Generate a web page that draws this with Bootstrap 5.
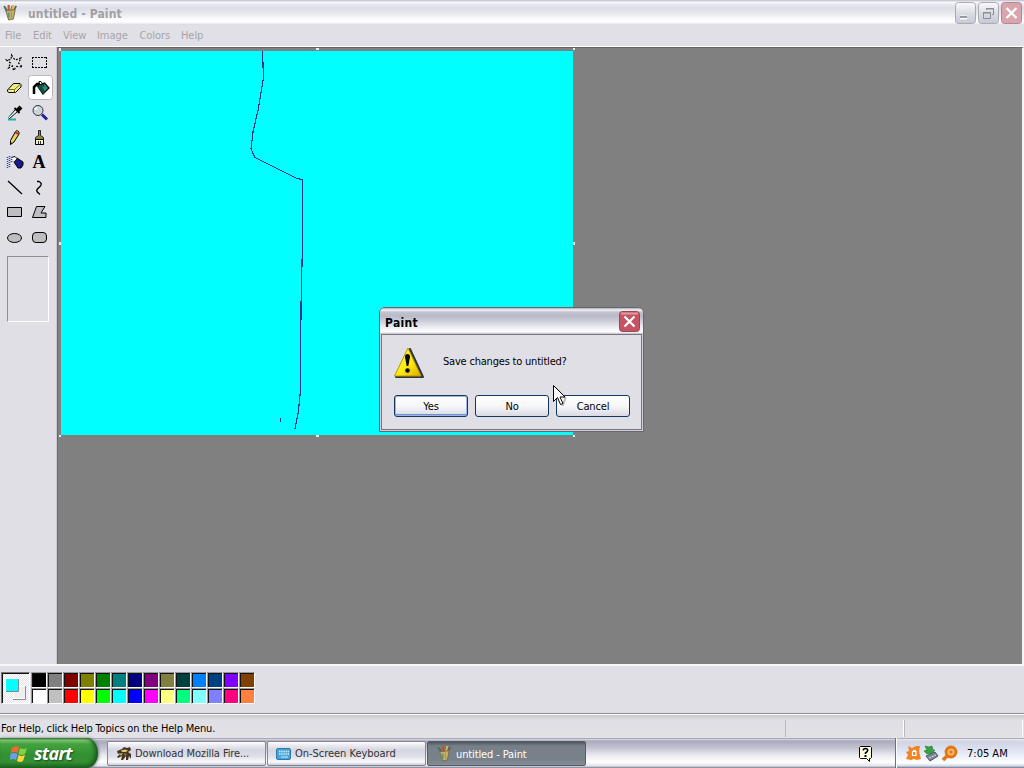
<!DOCTYPE html>
<html lang="en">
<head>
<meta charset="utf-8">
<title>untitled - Paint</title>
<link href="https://cdn.jsdelivr.net/npm/bootstrap@5.3.0/dist/css/bootstrap.min.css" rel="stylesheet">
<style>
body{width:1024px;height:768px;overflow:hidden;font:11px/14px "DejaVu Sans Condensed","DejaVu Sans",sans-serif;font-stretch:condensed;background:#e0dfe5;color:#000}
svg{display:block;flex:none}
span{white-space:nowrap}
.title-bar{height:25px;background:linear-gradient(#c9c8d9 0,#c9c8d9 1px,#fff 2px,#e9e9f0 4px,#dedee8 8px,#e6e6ee 13px,#fbfbfd 19px,#fff 22px,#e6e6ec 24px,#d6d6de);color:#a09fa4;padding:0 2px 0 3px}
.title-bar .name{font-weight:700;font-size:12px;margin:2px 0 0 10px;letter-spacing:.14px}
.cap-btns{gap:2px}
.menu-bar{height:21px;background:#e0e0e6;color:#a6a5ab;padding:1px 5px 0}
.menu-bar span{display:block;letter-spacing:-.07px}
.work{height:618px;border-top:1px solid #fff}
.tool-box{width:57px;background:#e0dfe5;border-right:1px solid #c9c8ce}
.tools{padding:2px 4px 0 2px;display:grid;grid-template-columns:25px 25px;grid-auto-rows:25px}
.tool-opt{width:42px;height:66px;margin:7px 0 0 7px;border:1px solid;border-color:#908f94 #fff #fff #908f94}
.area{background:#808080;border-top:1px solid #666;border-left:1px solid #6c6c6c;border-right:2px solid #f4f4f6;padding:0 0 0 1px}
.color-box{height:50px;border-top:2px solid #f8f8fa;border-bottom:1px solid #8c8c92;padding:6px 0 0 1px;background:#e0dfe5}
.current{width:29px;height:32px;border:1px solid;border-color:#777 #fff #fff #777;box-shadow:inset 1px 1px #111;background:repeating-conic-gradient(#fff 0 25%,#e4e3e8 0 50%) 0 0/2px 2px}
.palette{display:grid;grid-template-columns:repeat(14,16px);grid-auto-rows:16px;margin-left:1px}
.palette i{border:1px solid;border-color:#99989c #fff #fff #99989c;box-shadow:inset 1px 1px #111}
.status{height:24px;border-top:1px solid #fff;background:linear-gradient(#c8c8cf,#e0dfe5 5px,#e1e1e6);padding:4px 1px 0 1px}
.help-txt{letter-spacing:-.18px}
.status i{height:17px;border-left:1px solid #b9b8be;border-right:1px solid #fff}
.task-bar{height:30px;background:linear-gradient(#77778a 0,#dcdce8 1px,#a9a9ba 3px,#c3c3d1 10px,#e9e9f0 17px,#fff 24px,#e2e2ea 28px,#77778e)}
.start{width:98px;border-radius:0 11px 11px 0/0 15px 15px 0;background:linear-gradient(#37742f,#80c977 2px,#45a13d 6px,#319132 17px,#368f32 24px,#206d24);box-shadow:inset -3px -1px 4px #165b1c,1px 0 3px #777788;padding-left:10px;color:#fff;font:italic 700 18px/27px "Open Sans","Liberation Sans",sans-serif;text-shadow:1px 1px 2px #174716;gap:6px}
.st{letter-spacing:-.7px}
.task{height:25px;width:159px;margin-top:3px;border:1px solid #868695;border-radius:2px;background:linear-gradient(#fff 0,#f1f1f5 2px,#d6d6e1 8px,#dedee8 14px,#f9f9fc 20px,#c9c9d5);color:#333;padding:0 8px;gap:3px}
.t1{letter-spacing:-.1px}
.t2{letter-spacing:-.03px}
.task.on{background:linear-gradient(#4f555e,#777f89 4px,#79818b 18px,#858d96);border-color:#565c65;color:#fff}
.t3{margin:2px 0 0 1px;letter-spacing:-.12px}
.tray{width:129px;border-left:1px solid #70707c;box-shadow:inset 1px 0 #fff;background:linear-gradient(#77778a 0,#e8e8ef 1px,#d0d3e2 4px,#dadfee 10px,#edf0fb 18px,#fff 25px,#d5d8e5 28px,#6d7189)}
.dlg{left:379px;top:307px;width:265px;height:125px;border:1px solid #66666e;border-radius:6px 6px 0 0;background:#e0dfe5;box-shadow:inset 0 0 0 1px #d0d0da}
.dlg-head{height:26px;border-radius:5px 5px 0 0;background:linear-gradient(#aaaabb 0,#f4f4f8 2px,#c4c4d0 4px,#b9b9c8 8px,#d2d2dd 14px,#f5f5f9 21px,#fff 24px,#b8b8c2);padding:1px 3px 0 5px}
.dlg-head span{font-weight:700;font-size:12px;margin-top:2px;letter-spacing:.3px}
.dlg-body{height:96px;margin:0 1px 1px;border:1px solid #77777f;padding:10px 10px 0 12px}
.msg{letter-spacing:-.2px}
.xp-btn{width:74px;height:22px;padding:1px 0 0;border:1px solid #17365d;border-radius:3px;background:linear-gradient(#fff,#f7f7fa 50%,#d9d9e4);font-size:11px;line-height:19px;color:#000;text-align:center;letter-spacing:-.15px}
.xp-btn.def{box-shadow:inset 0 0 0 1px #9bb6e4,inset 0 -2px #6f90d1}
.cursor-arrow{left:553px;top:384px}
</style>
<script src="https://cdn.jsdelivr.net/npm/bootstrap@5.3.0/dist/js/bootstrap.bundle.min.js"></script>
</head>
<body class="d-flex flex-column position-relative">
<svg width="0" height="0" class="position-absolute"><defs>
<symbol id="cup" viewBox="0 0 16 18"><path d="M2 3l3 6M6 1v8M10 2L8 9M14 2l-4 8" stroke="#6e5a50" stroke-width="2"/><path d="M1 2l3 6" stroke="#348744" stroke-width="1.500"/><path d="M6 1v6" stroke="#c65442" stroke-width="1.500"/><path d="M11 1L9 9" stroke="#e4b738" stroke-width="2"/><path d="M3 7l10-1-2 10-5 1z" fill="#c6b16b" stroke="#736b53"/><path d="M6 9v6" stroke="#5f9a63" stroke-width="2"/><path d="M9 8v7" stroke="#d77b42"/></symbol>
<linearGradient id="gcap" x2="0" y2="1"><stop stop-color="#fafafd"/><stop offset=".5" stop-color="#dcdce5"/><stop offset="1" stop-color="#c8c8d3"/></linearGradient>
<linearGradient id="gwarn" x2="1" y2="1"><stop stop-color="#ffff39"/><stop offset=".6" stop-color="#ffe513"/><stop offset="1" stop-color="#dca800"/></linearGradient>
</defs></svg>

<header class="title-bar d-flex align-items-center">
<svg width="15" height="17"><use href="#cup"/></svg><span class="name">untitled - Paint</span>
<div class="cap-btns d-flex ms-auto">
<svg width="21" height="22"><rect x=".5" y=".5" width="20" height="21" rx="3" fill="url(#gcap)" stroke="#aaaab6"/><path d="M5 15.500h7" stroke="#fff" stroke-width="4"/><path d="M5 15h7" stroke="#98989f" stroke-width="2"/></svg>
<svg width="21" height="22"><rect x=".5" y=".5" width="20" height="21" rx="3" fill="url(#gcap)" stroke="#aaaab6"/><path d="M8.500 8V6.500h7v6H14M8 7h8M5.500 10.500h7v6h-7zM5 11h8" fill="none" stroke="#8d8d94"/></svg>
<svg width="21" height="22"><rect x=".5" y=".5" width="20" height="21" rx="3" fill="#d8a5ae" stroke="#b98490"/><path d="M5.500 6l10 10M15.500 6l-10 10" stroke="#fff" stroke-width="2.200"/></svg>
</div></header>
<nav class="menu-bar d-flex align-items-center"><span style="width:28px">File</span><span style="width:30px">Edit</span><span style="width:34px">View</span><span style="width:42.500px">Image</span><span style="width:41.500px">Colors</span><span>Help</span></nav>

<main class="work d-flex">
<aside class="tool-box flex-shrink-0"><div class="tools">
<svg width="25" height="25"><path d="M9.500 6l3.500 5 6-2-2.500 5 4 4-6-.500-3 4-1-4.500-4 2 2-5-4-3 4.500-.5z" fill="none" stroke="#000" stroke-width="1.200" stroke-dasharray="2 1.500"/></svg>
<svg width="25" height="25"><path d="M5 8.500h15M5 18.500h15M5.500 8v11M19.500 8v11" fill="none" stroke="#000" stroke-dasharray="2 1"/></svg>
<svg width="25" height="25"><path d="M5.500 16l6-6.500h6.500l1 1v2.500l-5.500 5.500h-6.500l-1.500-1z" fill="#eeee82" stroke="#000"/><path d="M6 15.500h6.500l6-5.500M12.500 15.500v3" fill="none" stroke="#6c6c25"/></svg>
<svg width="25" height="25" overflow="visible"><rect x="1.500" y="1.500" width="24" height="24" rx="3" fill="#fff" stroke="#b7b7bc"/><path d="M7 20v-7l3-3h3" fill="none" stroke="#000" stroke-width="2.500"/><path d="M10.500 12l7-3 4.500 5-6 6z" fill="#2d9078" stroke="#000" stroke-width="1.300"/><path d="M10 12l5-1 3 8-2 1z" fill="#0b4e44"/><path d="M12 10V7.500h2l3 5" fill="none" stroke="#000"/></svg>
<svg width="25" height="25"><path d="M6 20.500h8" stroke="#30a6a3" stroke-width="2"/><path d="M6.500 18.500l7-8 2 2-8 7z" fill="#fff" stroke="#000"/><path d="M12.500 9l5 5" stroke="#000" stroke-width="2"/><path d="M15 12l4-4" stroke="#000" stroke-width="4"/><path d="M6 19l5-5" stroke="#26a5a1"/></svg>
<svg width="25" height="25"><path d="M15 15.500l5 5" stroke="#2121a0" stroke-width="3"/><circle cx="11" cy="11.500" r="5" fill="#c9d4dc" stroke="#333"/><path d="M8 10.500l2-2" stroke="#fff" stroke-width="2"/></svg>
<svg width="25" height="25"><path d="M8.500 20.500v-4l5-9 1.500-1 2 1.500v2l-5 8z" fill="#e8d461" stroke="#000"/><path d="M13 8l3 2" stroke="#c3242b" stroke-width="2"/><path d="M8 21v-3l2 1z"/></svg>
<svg width="25" height="25"><path d="M11.500 6.500h2v5l3 2v7h-8v-7l3-2z" fill="#8e8c36" stroke="#222"/><path d="M8.500 15.500h8v5h-8z" fill="#f4f3c9" stroke="#000"/><path d="M11.500 17v3M13.500 17v3" stroke="#333"/></svg>
<svg width="25" height="25"><path d="M12 13l3-4 6 4v3l-2 3h-3z" fill="#191990" stroke="#000"/><path d="M9 8.500l4-1 2 2-2 3" fill="#fff" stroke="#000"/><path d="M5.500 8v12M7.500 7v11M9.500 8v6" stroke="#3444b2" stroke-width="1.500" stroke-dasharray="1 1"/></svg>
<svg width="25" height="25"><text x="5.500" y="19" font-family="Liberation Serif,serif" font-weight="700" font-size="18">A</text></svg>
<svg width="25" height="25"><path d="M6 7l14 13" stroke="#000" stroke-width="1.300"/></svg>
<svg width="25" height="25"><path d="M10 7.500h2q4 2 1 5l-3 3q-1 2 2 4l1 1" fill="none" stroke="#000" stroke-width="1.300"/></svg>
<svg width="25" height="25"><path d="M5.500 8.500h14v9h-14z" fill="#bebdc2" stroke="#000"/></svg>
<svg width="25" height="25"><path d="M9.500 7.500h8.500l-4 6.500h5v4.500H5.500z" fill="#bebdc2" stroke="#000"/></svg>
<svg width="25" height="25"><ellipse cx="12.500" cy="14" rx="7" ry="4.500" fill="#bebdc2" stroke="#000"/></svg>
<svg width="25" height="25"><rect x="5.500" y="8.500" width="14" height="10" rx="3.500" fill="#bebdc2" stroke="#000"/></svg>
</div><div class="tool-opt"></div></aside>
<section class="area flex-grow-1">
<svg width="519" height="392"><path fill="#0ff" d="M2 3h512v384H2z"/><g transform="translate(-59 -48)" fill="none" stroke="#20348c" stroke-width="1.200" shape-rendering="crispEdges"><path d="M262.500 51L263.500 78L258.500 108L253 132L251 149L255 157.500L296 178L302.500 180V242L301 306L300.500 391L298 414L295 429"/><path d="M280.500 418v4"/></g><path fill="#e4eeee" d="M0 0h2v3h-2zM257 0h3v2h-3zM514 0h2v2h-2zM0 194h2v3h-2zM514 194h2v3h-2zM0 387h2v2h-2zM257 387h3v2h-3zM514 387h2v2h-2z"/></svg>
</section></main>

<section class="color-box d-flex"><div class="current"><svg width="27" height="30"><path fill="#eee" stroke="#fff" d="M11.500 13.500h12v12h-12z"/><path d="M11 26.500h12.500V13" fill="none" stroke="#8b8b8f"/><path fill="#fff" d="M3 5h14v14H3z"/><path fill="#0ff" d="M4 6h12v12H4z"/><path d="M4 18.500h12.500V6" fill="none" stroke="#738d90"/></svg></div><div class="palette" id="palette"></div></section>
<footer class="status d-flex align-items-center"><span class="help-txt">For Help, click Help Topics on the Help Menu.</span><i class="ms-auto" style="width:119px"></i><i style="width:119px"></i></footer>

<div class="task-bar d-flex">
<div class="start d-flex align-items-center"><svg width="18" height="18"><path d="M2 4q4-3 7-1L7.500 9q-3-2-7 0z" fill="#f06932"/><path d="M10 4q3 2 7 0l-2 6q-3 2-6.500 0z" fill="#84cf45"/><path d="M.500 10q4-2 7 0l-1.500 6q-3-2-6 0z" fill="#6b9df5"/><path d="M8.500 11q3 2 6.500 0l-2 6q-3 2-6 0z" fill="#ffd442"/></svg><span class="st">start</span></div>
<div class="task d-flex align-items-center" style="margin-left:9px"><svg width="16" height="16"><path d="M1 5l5-2 2-2 3 1 3-1 1 3-3 2 3 2v5l-2-3-1 4h-2v-4l-3 4H5l1-4-4 2-1-1 4-4-3 1z" fill="#443521"/><path d="M5 4.500l4-1 3 1-2 1.500H6zM4 8l3-1-2 3z" fill="#dac27d"/><path d="M8 7l3 1-2 2z" fill="#9a7b42"/></svg><span class="t1">Download Mozilla Fire...</span></div>
<div class="task d-flex align-items-center" style="margin-left:1px"><svg width="16" height="16"><rect x=".5" y="2.500" width="14" height="11" rx="1.500" fill="#4aa5d8" stroke="#2a78aa"/><path d="M3 5.500h10M3 8h10" stroke="#c9edf8" stroke-width="1.500" stroke-dasharray="1.500 .7"/><path d="M5 11h7" stroke="#c9edf8"/></svg><span class="t2">On-Screen Keyboard</span></div>
<div class="task on d-flex align-items-center" style="margin-left:1px;padding-left:9px"><svg width="15" height="17"><use href="#cup"/></svg><span class="t3">untitled - Paint</span></div>
<svg width="16" height="18" class="ms-auto" style="margin:7px 21px 0 0"><path d="M2.500 1.500h10l1 1v10l-1 1h-1v3l-3-3h-6l-1-1v-10z" fill="#ffffe2" stroke="#000"/><path d="M5.300 5.500q0-2 2.200-2t2.200 2q0 1-2.200 2.500V9" fill="none" stroke="#000" stroke-width="1.600"/><path d="M6.500 10h2v2h-2z"/></svg>
<div class="tray d-flex align-items-center"><svg width="54" height="20" style="margin:1px 0 0 9px"><path d="M3 2l4 2 4-2h4l-1 5 2 8-4 1-3-1-3 1-5-1 2-4-2-3 3-1z" fill="#f28422"/><path d="M10.500 7.500h-3v4h3.500v-4q-1-1.500-3-1" fill="none" stroke="#fff" stroke-width="1.200"/><path d="M21 12l9-4 3 4-8 5z" fill="#7a8793" stroke="#4c5662"/><path d="M24 14l7-3" stroke="#dce6e8" stroke-dasharray="2 1"/><path d="M20 2l4 1 3-1 1 4h2l-3 3-5 1-3-3 3-1z" fill="#38a141" stroke="#237333" stroke-width=".6"/><circle cx="46" cy="8" r="5" fill="#f6b66e" stroke="#e27612" stroke-width="2.800"/><circle cx="46" cy="8" r="1.500" fill="#e27612"/><path d="M42 12l-4 4" stroke="#e27612" stroke-width="3.500"/></svg><span class="clock" style="margin:1px 0 0 8px">7:05 AM</span></div>
</div>

<div class="dlg position-absolute">
<div class="dlg-head d-flex align-items-center justify-content-between"><span>Paint</span><svg width="21" height="21"><rect x=".5" y=".5" width="20" height="20" rx="3" fill="#c45463" stroke="#9b4653"/><path d="M2 2.500h17" stroke="#df9ba3" stroke-width="2"/><path d="M5.500 5.500l10 10M15.500 5.500l-10 10" stroke="#fff" stroke-width="2.200"/></svg></div>
<div class="dlg-body"><div class="d-flex align-items-center" style="gap:18px;margin-left:-1px"><svg width="32" height="34"><path d="M17 4L30 32H3z" fill="#343441" stroke="#343441" stroke-width="2" stroke-linejoin="round"/><path d="M15 3L28 31H1.500z" fill="url(#gwarn)" stroke="#b39b00" stroke-linejoin="round"/><path d="M12 12q0-3 2.500-3t2.500 3l-1.700 9h-1.600z"/><circle cx="14.500" cy="25.500" r="2.300"/></svg><span class="msg">Save changes to untitled?</span></div>
<div class="d-flex" style="gap:7px;margin-top:16px"><button class="xp-btn def">Yes</button><button class="xp-btn">No</button><button class="xp-btn">Cancel</button></div></div></div>
<svg class="cursor-arrow position-absolute" width="14" height="24"><path d="M2.500 4l10 10-3 8" fill="none" stroke="#777" opacity=".5" stroke-width="2"/><path d="M.500 1.500v16l4-4 3 7 2.500-1-3-6.500h5z" fill="#fff" stroke="#000"/></svg>
<script>
const colors="#000 #808080 #800000 #808000 #008000 #008080 #000080 #800080 #808040 #004040 #0080ff #004080 #8000ff #804000 #fff #c0c0c0 #f00 #ff0 #0f0 #0ff #00f #f0f #ffff80 #00ff80 #80ffff #8080ff #ff0080 #ff8040".split(" ");
document.getElementById("palette").innerHTML=colors.map(c=>`<i style="background:${c}"></i>`).join("");
</script>
</body>
</html>
